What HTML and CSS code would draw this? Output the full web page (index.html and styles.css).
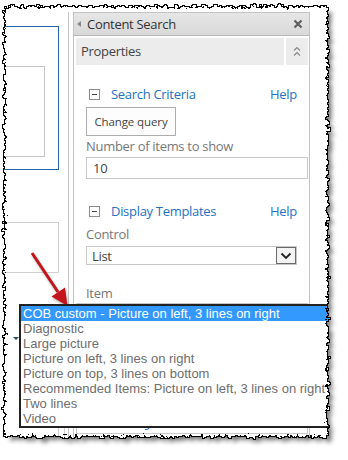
FILE: index.html
```html
<!DOCTYPE html>
<html>
<head>
<meta charset="utf-8">
<link rel="stylesheet" href="styles.css">
</head>
<body>
<div class="page">
  <div class="layout">
    <div class="leftcol">
      <div class="bluebox"><div class="graybox"></div></div>
      <div class="graybox2"></div>
      <div class="box3"><div class="box3in"><span class="tri"></span></div></div>
    </div>
    <div class="panel">
      <div class="ph">
        <span class="ph-arrow"></span>
        <span class="ph-title">Content Search</span>
        <svg class="ph-close" width="10" height="10" viewBox="0 0 10 10"><path d="M1.5 1.5 L8.5 8.5 M8.5 1.5 L1.5 8.5" stroke="#5e5e5e" stroke-width="2.2" fill="none"/></svg>
      </div>
      <div class="props">
        <div class="props-bar">Properties</div>
        <div class="props-chev">
          <svg width="8" height="11" viewBox="0 0 8 11"><path d="M1 4.5 L4 1.5 L7 4.5 M1 9.5 L4 6.5 L7 9.5" stroke="#8a8a8a" stroke-width="1.2" fill="none"/></svg>
        </div>
      </div>
      <div class="body">
        <div class="sec"><span class="minus"></span><span class="sec-title">Search Criteria</span><span class="help">Help</span></div>
        <div class="btn">Change query</div>
        <div class="label">Number of items to show</div>
        <div class="input">10</div>
        <div class="sec sec2"><span class="minus"></span><span class="sec-title">Display Templates</span><span class="help">Help</span></div>
        <div class="label lab-control">Control</div>
        <div class="select"><span class="sel-text">List</span><span class="sel-btn"><svg width="12" height="8" viewBox="0 0 12 8"><path d="M1.5 1.5 L6 6 L10.5 1.5" stroke="#222" stroke-width="1.8" fill="none"/></svg></span></div>
        <div class="label lab-item">Item</div>
        <div class="itembox"><span class="bluebit"></span></div>
      </div>
    </div>
  </div>

  <svg class="arrow" width="50" height="64" viewBox="0 0 50 64">
    <line x1="7" y1="5" x2="33" y2="44" stroke="#c4151d" stroke-width="3"/>
    <polygon points="42.5,58 26.5,48.5 40,39.5" fill="#c4151d"/>
  </svg>

  <div class="list">
    <div class="opt sel">COB custom - Picture on left, 3 lines on right</div>
    <div class="opt">Diagnostic</div>
    <div class="opt">Large picture</div>
    <div class="opt">Picture on left, 3 lines on right</div>
    <div class="opt">Picture on top, 3 lines on bottom</div>
    <div class="opt">Recommended Items: Picture on left, 3 lines on right</div>
    <div class="opt">Two lines</div>
    <div class="opt">Video</div>
  </div>

  <svg class="torn" width="348" height="460" viewBox="0 0 348 460">
    <defs>
      <filter id="torn" filterUnits="userSpaceOnUse" x="0" y="0" width="348" height="460">
        <feTurbulence type="fractalNoise" baseFrequency="0.28" numOctaves="3" seed="7" result="noise"/>
        <feDisplacementMap in="SourceGraphic" in2="noise" scale="9" xChannelSelector="R" yChannelSelector="G" result="shape"/>
        <feMorphology in="shape" operator="dilate" radius="1" result="dil"/>
        <feComposite in="dil" in2="shape" operator="out" result="edge"/>
        <feOffset in="shape" dx="5" dy="5" result="off"/>
        <feGaussianBlur in="off" stdDeviation="2.2" result="blur"/>
        <feComponentTransfer in="blur" result="shadowA">
          <feFuncA type="linear" slope="0.8"/>
        </feComponentTransfer>
        <feComposite in="shadowA" in2="shape" operator="out" result="shadow"/>
        <feFlood flood-color="#ffffff" result="white"/>
        <feComposite in="white" in2="shape" operator="out" result="whiteOut"/>
        <feMerge>
          <feMergeNode in="whiteOut"/>
          <feMergeNode in="shadow"/>
          <feMergeNode in="edge"/>
        </feMerge>
      </filter>
    </defs>
    <rect x="5" y="7" width="322" height="429" fill="#000" filter="url(#torn)"/>
  </svg>
</div>
</body>
</html>
```

FILE: styles.css
```css
* { box-sizing: border-box; }
html, body { margin: 0; padding: 0; background: #fff; }
.page {
  position: relative;
  width: 348px;
  height: 460px;
  overflow: hidden;
  font-family: "Open Sans", "Noto Sans", sans-serif;
  letter-spacing: -0.3px;
}
.layout {
  display: flex;
  height: 460px;
  padding-top: 12px;
}
.leftcol {
  width: 69px;
  flex: none;
  border-right: 1px solid #c9c9c9;
}
.bluebox {
  margin-top: 14px;
  width: 59px;
  height: 144px;
  border: 1px solid #2463a6;
}
.graybox {
  margin-top: 39px;
  width: 44px;
  height: 91px;
  border: 1px solid #c6c6c6;
  border-left: none;
}
.graybox2 {
  margin-top: 52px;
  width: 59px;
  height: 51px;
  border: 1px solid #d0d0d0;
}
.box3 {
  margin-top: 33px;
  width: 65px;
  height: 200px;
  border-right: 1px solid #cfcfcf;
}
.box3in {
  width: 59px;
  height: 200px;
  border-right: 1px solid #cfcfcf;
  padding-top: 31px;
  padding-left: 13px;
}
.tri {
  display: block;
  width: 0;
  height: 0;
  border-left: 3px solid transparent;
  border-right: 3px solid transparent;
  border-top: 3px solid #2b4a6e;
}
.panel {
  margin-left: 4px;
  width: 237px;
  flex: none;
  border: 1px solid #c3c3c3;
  border-bottom: none;
}
.ph {
  height: 23px;
  display: flex;
  align-items: center;
  background: linear-gradient(#e6e6e6, #d9d9d9);
  border-bottom: 1px solid #b9b9b9;
}
.ph-arrow {
  margin-left: 3px;
  width: 0;
  height: 0;
  border-top: 3.5px solid transparent;
  border-bottom: 3.5px solid transparent;
  border-right: 4px solid #8a8a8a;
}
.ph-title {
  margin-left: 6px;
  font-size: 13px;
  color: #333;
}
.ph-close {
  margin-left: auto;
  margin-right: 6px;
}
.props {
  margin-top: 2px;
  display: flex;
  gap: 2px;
  padding: 0 1px 0 2px;
}
.props-bar {
  width: 208px;
  height: 27px;
  line-height: 27px;
  background: #ececec;
  padding-left: 5px;
  font-size: 13px;
  color: #444;
}
.props-chev {
  width: 22px;
  height: 27px;
  background: #ececec;
  display: flex;
  align-items: center;
  justify-content: center;
}
.body {
  padding: 0 1px 0 12px;
}
.sec {
  margin-top: 21px;
  height: 16px;
  display: flex;
  align-items: center;
  padding-right: 11px;
  font-size: 13px;
}
.minus {
  margin-left: 3px;
  width: 11px;
  height: 11px;
  border: 1px solid #8c8c8c;
  position: relative;
  flex: none;
}
.minus::after {
  content: "";
  position: absolute;
  left: 2px;
  top: 4px;
  width: 5px;
  height: 1px;
  background: #444;
}
.sec-title {
  margin-left: 11px;
  color: #2272c3;
}
.help {
  margin-left: auto;
  color: #2272c3;
}
.btn {
  margin-top: 5px;
  width: 90px;
  height: 29px;
  border: 1px solid #adadad;
  background: #fdfdfd;
  font-size: 11.5px;
  letter-spacing: -0.1px;
  color: #444;
  display: flex;
  align-items: center;
  justify-content: center;
}
.label {
  margin-top: 2px;
  height: 16px;
  line-height: 16px;
  font-size: 13px;
  color: #777;
}
.input {
  margin-top: 3px;
  width: 222px;
  height: 22px;
  border: 1px solid #c9c9c9;
  padding-left: 6px;
  line-height: 20px;
  font-size: 13px;
  color: #444;
}
.sec2 { margin-top: 24px; }
.lab-control { margin-top: 7px; }
.select {
  margin-top: 4px;
  width: 211px;
  height: 19px;
  border: 1px solid #c9c9c9;
  display: flex;
  align-items: center;
}
.sel-text {
  padding-left: 5px;
  font-size: 13px;
  color: #444;
}
.sel-btn {
  margin-left: auto;
  width: 20px;
  height: 17px;
  border: 1px solid #6a6a6a;
  background: #f3f3f3;
  display: flex;
  align-items: center;
  justify-content: center;
}
.lab-item { margin-top: 20px; }
.itembox {
  margin-top: 2px;
  margin-left: -10px;
  width: 232px;
  height: 131px;
  border: 1px solid #c9c9c9;
  padding-top: 121px;
  padding-left: 68px;
}
.bluebit {
  display: block;
  width: 5px;
  height: 5px;
  border-right: 1.5px solid #2a7bd0;
  border-bottom: 1.5px solid #2a7bd0;
  border-radius: 0 0 4px 0;
}
.arrow {
  position: absolute;
  left: 25px;
  top: 248px;
  filter: drop-shadow(1px 2px 1px rgba(0,0,0,0.3));
}
.list {
  position: absolute;
  left: 19px;
  top: 304px;
  width: 313px;
  height: 124px;
  border: 2px solid #222;
  background: #fff;
  font-family: "Liberation Sans", Arial, sans-serif;
  font-size: 13px;
  letter-spacing: 0;
}
.opt {
  height: 15px;
  line-height: 15px;
  padding-left: 2px;
  white-space: nowrap;
  overflow: hidden;
  color: #6e6e6e;
}
.opt.sel {
  background: #3399ff;
  color: #fff;
}
.torn {
  position: absolute;
  left: 0;
  top: 0;
  pointer-events: none;
}
```
